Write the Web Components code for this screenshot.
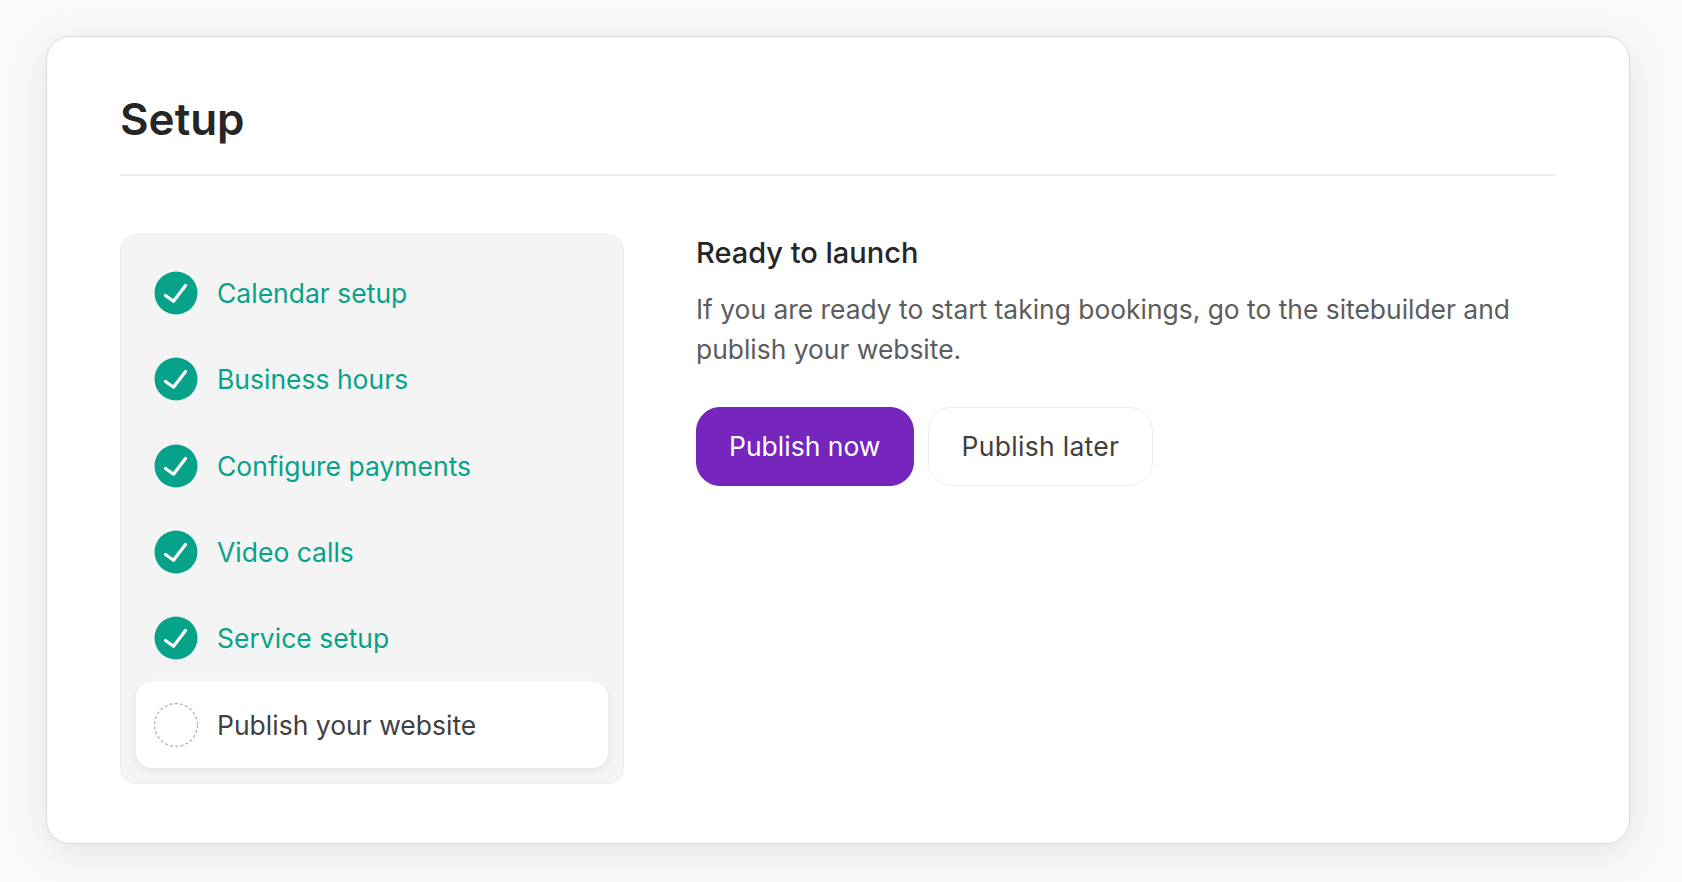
<!DOCTYPE html>
<html lang="en">
<head>
<meta charset="utf-8">
<title>Setup</title>
<style>
  html, body { height: 100%; }
  body {
    margin: 0;
    background: #fafafa;
    font-family: 'Inter', 'Liberation Sans', sans-serif;
    color: #262626;
  }
</style>
</head>
<body>
<setup-card heading="Setup">
  <step-list slot="steps">
    <step-item done>Calendar setup</step-item>
    <step-item done>Business hours</step-item>
    <step-item done>Configure payments</step-item>
    <step-item done>Video calls</step-item>
    <step-item done>Service setup</step-item>
    <step-item active>Publish your website</step-item>
  </step-list>
  <launch-panel slot="detail" heading="Ready to launch">
    If you are ready to start taking bookings, go to the sitebuilder and publish your website.
    <action-button slot="actions" primary>Publish now</action-button>
    <action-button slot="actions" secondary>Publish later</action-button>
  </launch-panel>
</setup-card>

<script>
class SetupCard extends HTMLElement {
  constructor() {
    super();
    this.attachShadow({ mode: 'open' });
  }

  connectedCallback() {
    this.shadowRoot.innerHTML = `
      <style>
        :host {
          display: block;
          box-sizing: border-box;
          margin: 36px 52px 0 46px;
          height: 808px;
          padding: 0 73px 0 73px;
          background: #fff;
          border: 1px solid #dcdcdc;
          border-radius: 24px;
          box-shadow: 0 8px 40px rgba(0, 0, 0, 0.1);
        }
        header {
          height: 139px;
          box-sizing: border-box;
          padding-top: 58px;
          border-bottom: 2px solid #ededed;
        }
        h1 {
          margin: 0;
          font-size: 44px;
          line-height: 48px;
          font-weight: 600;
          color: #262626;
        }
        .body {
          display: grid;
          grid-template-columns: 504px 1fr;
          column-gap: 72px;
          margin-top: 58px;
        }
      </style>
      <header><h1>${this.getAttribute('heading')}</h1></header>
      <div class="body">
        <slot name="steps"></slot>
        <slot name="detail"></slot>
      </div>
    `;
  }
}

class StepList extends HTMLElement {
  constructor() {
    super();
    this.attachShadow({ mode: 'open' });
  }

  connectedCallback() {
    this.shadowRoot.innerHTML = `
      <style>
        :host {
          display: flex;
          flex-direction: column;
          box-sizing: border-box;
          height: 550px;
          padding: 15px;
          background: #f4f4f4;
          border: 1px solid #ececec;
          border-radius: 16px;
        }
      </style>
      <slot></slot>
    `;
  }
}

class StepItem extends HTMLElement {
  constructor() {
    super();
    this.attachShadow({ mode: 'open' });
  }

  connectedCallback() {
    const icon = this.hasAttribute('done')
      ? `<svg width="44" height="44" viewBox="0 0 44 44">
           <circle cx="22" cy="22" r="21.5" fill="#06a38a"/>
           <path d="M11.5 24.5 L19.5 30.2 L31.5 14.5" fill="none" stroke="#fff" stroke-width="3.2" stroke-linecap="round" stroke-linejoin="round"/>
         </svg>`
      : `<svg width="44" height="44" viewBox="0 0 44 44">
           <circle cx="22" cy="22" r="21.4" fill="none" stroke="#a8a8a8" stroke-width="1.1" stroke-dasharray="3 2.2"/>
         </svg>`;
    this.shadowRoot.innerHTML = `
      <style>
        :host {
          display: flex;
          align-items: center;
          gap: 19.5px;
          box-sizing: border-box;
          height: 86.3px;
          padding-left: 17.5px;
          font-size: 26.5px;
          color: #404040;
          border-radius: 16px;
        }
        :host([done]) { color: #06a38a; }
        :host([active]) {
          background: #fff;
          box-shadow: 0 2px 6px rgba(0, 0, 0, 0.08);
        }
        svg { display: block; flex: none; }
      </style>
      ${icon}
      <span><slot></slot></span>
    `;
  }
}

class LaunchPanel extends HTMLElement {
  constructor() {
    super();
    this.attachShadow({ mode: 'open' });
  }

  connectedCallback() {
    this.shadowRoot.innerHTML = `
      <style>
        :host { display: block; }
        h2 {
          margin: 0;
          font-size: 29px;
          line-height: 38px;
          font-weight: 500;
          color: #262626;
        }
        p {
          margin: 17px 0 0;
          font-size: 26.4px;
          line-height: 40px;
          color: #5c5c5c;
        }
        .actions {
          display: flex;
          gap: 14px;
          margin-top: 38px;
        }
      </style>
      <h2>${this.getAttribute('heading')}</h2>
      <p><slot></slot></p>
      <div class="actions"><slot name="actions"></slot></div>
    `;
  }
}

class ActionButton extends HTMLElement {
  constructor() {
    super();
    this.attachShadow({ mode: 'open' });
  }

  connectedCallback() {
    this.shadowRoot.innerHTML = `
      <style>
        :host {
          display: flex;
          align-items: center;
          box-sizing: border-box;
          height: 79px;
          padding: 0 32px 1px;
          font-size: 26.5px;
          color: #404040;
          background: #fff;
          border: 1px solid #ededed;
          border-radius: 24px;
        }
        :host([primary]) {
          color: #fff;
          background: #7625bd;
          border-color: #7625bd;
        }
        :host([secondary]) {
          padding: 0 33px 1px;
          letter-spacing: 0.3px;
        }
      </style>
      <slot></slot>
    `;
  }
}

customElements.define('setup-card', SetupCard);
customElements.define('step-list', StepList);
customElements.define('step-item', StepItem);
customElements.define('launch-panel', LaunchPanel);
customElements.define('action-button', ActionButton);
</script>
</body>
</html>
